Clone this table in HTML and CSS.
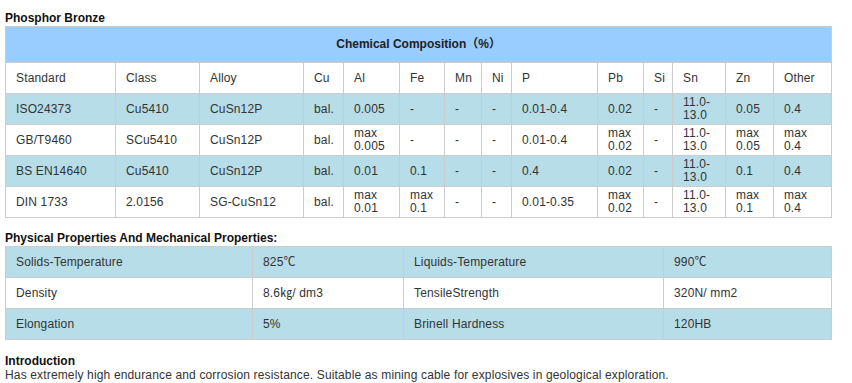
FILE: index.html
```html
<!DOCTYPE html>
<html>
<head>
<meta charset="utf-8">
<link rel="stylesheet" href="styles.css">
</head>
<body>
<div class="page">
  <h3 class="title first">Phosphor Bronze</h3>
  <table class="grid chem">
    <colgroup>
      <col class="c110"><col class="c84"><col class="c104"><col class="c40"><col class="c56"><col class="c45"><col class="c37"><col class="c30"><col class="c86"><col class="c46"><col class="c29"><col class="c53"><col class="c48"><col class="c58">
    </colgroup>
    <tr class="top"><td colspan="14">Chemical Composition<span class="paren">（%）</span></td></tr>
    <tr><td>Standard</td><td>Class</td><td>Alloy</td><td>Cu</td><td>Al</td><td>Fe</td><td>Mn</td><td>Ni</td><td>P</td><td>Pb</td><td>Si</td><td>Sn</td><td>Zn</td><td>Other</td></tr>
    <tr class="blue"><td>ISO24373</td><td>Cu5410</td><td>CuSn12P</td><td>bal.</td><td>0.005</td><td>-</td><td>-</td><td>-</td><td>0.01-0.4</td><td>0.02</td><td>-</td><td>11.0-<br>13.0</td><td>0.05</td><td>0.4</td></tr>
    <tr><td>GB/T9460</td><td>SCu5410</td><td>CuSn12P</td><td>bal.</td><td>max<br>0.005</td><td>-</td><td>-</td><td>-</td><td>0.01-0.4</td><td>max<br>0.02</td><td>-</td><td>11.0-<br>13.0</td><td>max<br>0.05</td><td>max<br>0.4</td></tr>
    <tr class="blue"><td>BS EN14640</td><td>Cu5410</td><td>CuSn12P</td><td>bal.</td><td>0.01</td><td>0.1</td><td>-</td><td>-</td><td>0.4</td><td>0.02</td><td>-</td><td>11.0-<br>13.0</td><td>0.1</td><td>0.4</td></tr>
    <tr><td>DIN 1733</td><td>2.0156</td><td>SG-CuSn12</td><td>bal.</td><td>max<br>0.01</td><td>max<br>0.1</td><td>-</td><td>-</td><td>0.01-0.35</td><td>max<br>0.02</td><td>-</td><td>11.0-<br>13.0</td><td>max<br>0.1</td><td>max<br>0.4</td></tr>
  </table>

  <h3 class="title second">Physical Properties And Mechanical Properties:</h3>
  <table class="grid phys">
    <colgroup>
      <col class="c247"><col class="c151"><col class="c260"><col class="c168">
    </colgroup>
    <tr class="blue"><td>Solids-Temperature</td><td>825℃</td><td>Liquids-Temperature</td><td>990℃</td></tr>
    <tr><td>Density</td><td>8.6㎏/ dm3</td><td>TensileStrength</td><td>320N/ mm2</td></tr>
    <tr class="blue"><td>Elongation</td><td>5%</td><td>Brinell Hardness</td><td>120HB</td></tr>
  </table>

  <h3 class="title third">Introduction</h3>
  <p class="intro">Has extremely high endurance and corrosion resistance. Suitable as mining cable for explosives in geological exploration.</p>
</div>
</body>
</html>
```

FILE: styles.css
```css
html, body {
  margin: 0;
  padding: 0;
  background: #fff;
}
.page {
  padding: 11px 0 0 5px;
  width: 826px;
  font-family: Arial, "Liberation Sans", "Noto Sans CJK SC", sans-serif;
  font-size: 12px;
  color: #333;
  letter-spacing: 0.15px;
}
.title {
  margin: 0;
  font-size: 12px;
  line-height: 14px;
  font-weight: bold;
  color: #111;
  letter-spacing: 0;
}
.title.first { margin-bottom: 1px; }
.title.second { margin-top: 13px; margin-bottom: 1px; }
.title.third { margin-top: 14px; }
.intro {
  margin: 0;
  line-height: 14px;
}
.grid {
  border-collapse: collapse;
  table-layout: fixed;
  width: 826px;
}
.grid td {
  border: 1px solid #ccc;
  height: 31px;
  padding: 0 10px;
  vertical-align: middle;
  line-height: 13px;
  box-sizing: border-box;
}
.grid tr.top td {
  background: #99ccff;
  height: 36px;
  text-align: center;
  color: #222;
  font-weight: bold;
  letter-spacing: 0;
}
.grid tr.blue td { background: #b7dde8; }
.c110 { width: 110px; }
.c84 { width: 84px; }
.c104 { width: 104px; }
.c40 { width: 40px; }
.c56 { width: 56px; }
.c45 { width: 45px; }
.c37 { width: 37px; }
.c30 { width: 30px; }
.c86 { width: 86px; }
.c46 { width: 46px; }
.c29 { width: 29px; }
.c53 { width: 53px; }
.c48 { width: 48px; }
.c58 { width: 58px; }
.c247 { width: 247px; }
.c151 { width: 151px; }
.c260 { width: 260px; }
.c168 { width: 168px; }
```
